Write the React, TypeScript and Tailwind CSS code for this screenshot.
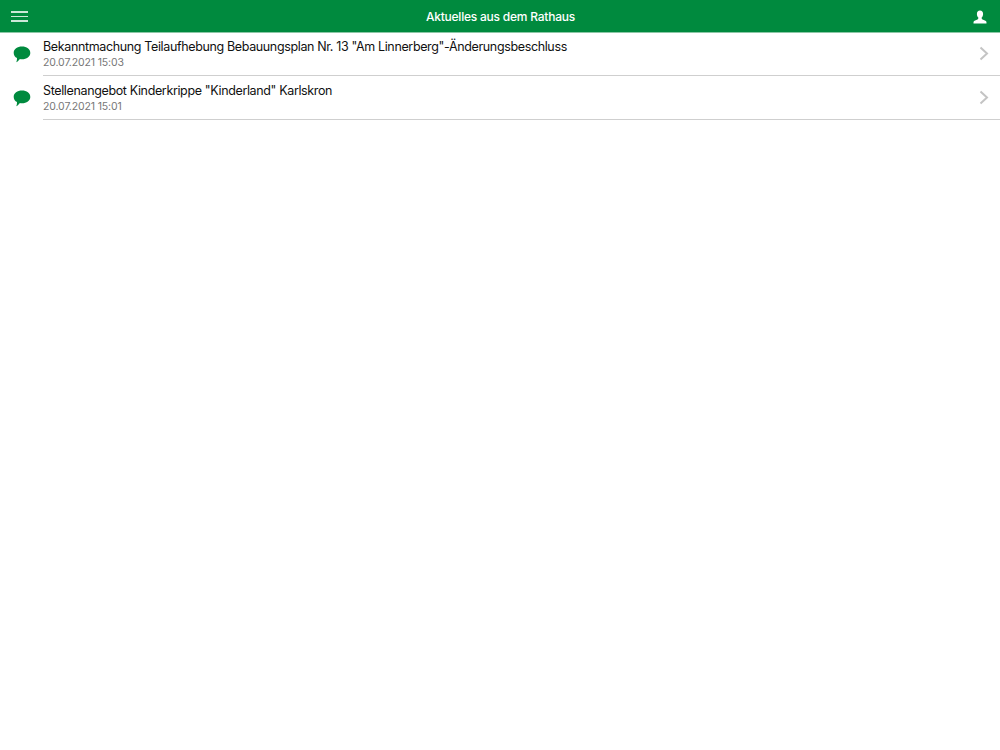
import React from 'react';

const NEWS = [
  { title: 'Bekanntmachung Teilaufhebung Bebauungsplan Nr. 13 "Am Linnerberg"-Änderungsbeschluss', date: '20.07.2021 15:03' },
  { title: 'Stellenangebot Kinderkrippe "Kinderland" Karlskron', date: '20.07.2021 15:01' },
];

const Bubble = () => (
  <svg width="18" height="17" viewBox="0 0 18 17" className="shrink-0">
    <path d="M9 .5C13.700.5 17.300 3.200 17.300 6.900 17.300 10.600 13.700 13.200 9 13.200c-.8 0-1.500-.1-2.200-.2-.8 1.300-2.100 2.600-3.500 3.200.5-1.200.8-2.700.7-4.100C1.900 11 .7 9.100.7 6.900.7 3.200 4.300.5 9 .5Z" fill="#008a3e" />
  </svg>
);

const App: React.FC = () => {
  return (
    <div className="min-h-[750px] bg-white font-['Inter','Liberation_Sans',sans-serif]">
      <header className="relative h-[32px] pt-px bg-[#008a3e] flex items-center justify-between pl-[11px] pr-[13px] shadow-[0_1px_0_#8cc7a6]">
        <div className="w-[17px] flex flex-col gap-[3px]">
          <div className="h-[1.500px] bg-white/80" />
          <div className="h-[1.500px] bg-white/80" />
          <div className="h-[1.500px] bg-white/80" />
        </div>
        <h1 className="text-[12px] font-medium text-white tracking-[-0.22px]">Aktuelles aus dem Rathaus</h1>
        <svg width="14" height="14" viewBox="0 0 14 14">
          <path d="M7 .5c2 0 3.100 1.400 3.100 3.400 0 1.500-.6 2.900-1.400 3.700-.2.800 0 1.400.8 1.800 1.600.7 3.500 1 3.900 2.300.1.500.1 1.100.1 1.800H.5c0-.7 0-1.300.1-1.800.4-1.300 2.300-1.600 3.900-2.300.8-.4 1-1 .8-1.800C4.500 6.800 3.900 5.400 3.900 3.900 3.900 1.900 5 .5 7 .5Z" fill="#fff" />
        </svg>
      </header>
      <ul>
        {NEWS.map((item) => (
          <li key={item.date} className="flex items-center pl-[13px]">
            <Bubble />
            <div className="ml-[12px] flex-1 h-[44px] border-b border-[#cfcfcf] flex items-center justify-between pr-[11px]">
              <div className="pt-px">
                <div className="text-[12.500px] leading-[16px] text-[#111111] tracking-[-0.36px]">{item.title}</div>
                <div className="mt-px text-[10.500px] leading-[14px] text-[#777777] tracking-[-0.14px]">{item.date}</div>
              </div>
              <svg width="10" height="15" viewBox="0 0 10 15" fill="none">
                <path d="M1.500 1.500 8 7.500 1.500 13.500" stroke="#c4c4c4" strokeWidth="2" />
              </svg>
            </div>
          </li>
        ))}
      </ul>
    </div>
  );
};

export default App;
